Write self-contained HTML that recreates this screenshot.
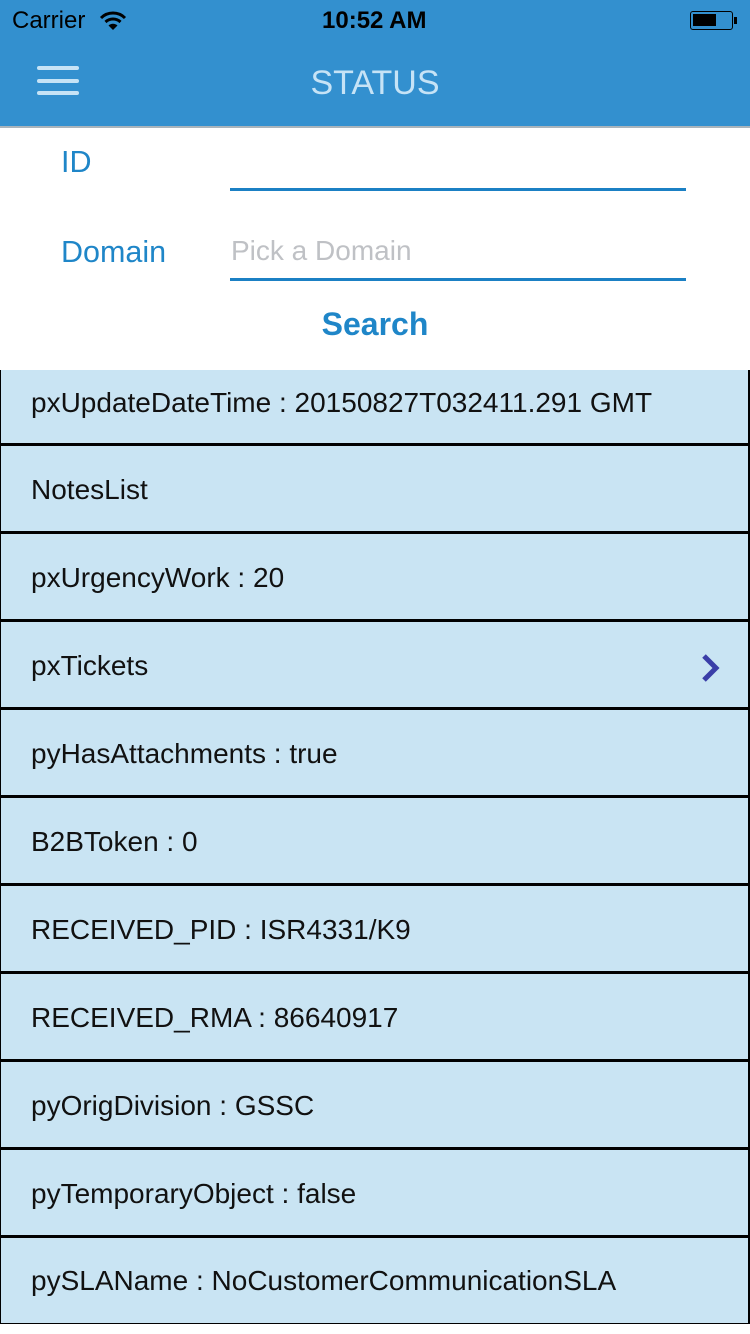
<!DOCTYPE html>
<html><head><meta charset="utf-8"><style>
*{margin:0;padding:0;box-sizing:border-box}
body{width:750px;height:1334px;background:#fff;position:relative;overflow:hidden;font-family:"Liberation Sans",sans-serif}
.hdr{position:absolute;left:0;top:0;width:750px;height:128px;background:#3390cf;border-bottom:2px solid #a9b4bc}
.t{position:absolute;font-size:24px;color:#000;top:7px}
.lbl{position:absolute;left:61px;color:#1f86c8;font-size:30.5px}
.ul{position:absolute;left:230px;width:456px;height:3px;background:#1b80c4}
.row{position:absolute;left:0;width:750px;background:#c9e4f3;border-left:1px solid #000;border-right:2px solid #000;font-size:28px;color:#111;padding-left:30px}
</style></head><body>
<div class="hdr">
<div class="t" style="left:12px">Carrier</div>
<svg style="position:absolute;left:99px;top:11px" width="28" height="20" viewBox="0 0 28 20"><path d="M2 7 A17 17 0 0 1 26 7" stroke="#000" stroke-width="3" fill="none"/><path d="M6.5 11 A11 11 0 0 1 21.5 11" stroke="#000" stroke-width="3" fill="none"/><path d="M14 19 L9.5 14.5 A6.5 6.5 0 0 1 18.5 14.5 Z" fill="#000"/></svg>
<div class="t" style="left:322px;font-weight:bold">10:52 AM</div>
<div style="position:absolute;left:690px;top:11px;width:43px;height:19px;border:1.5px solid #000;border-radius:3px"><div style="position:absolute;left:2px;top:2px;width:23px;height:12px;background:#000"></div></div>
<div style="position:absolute;left:734px;top:17px;width:3px;height:7px;background:#000"></div>
<div style="position:absolute;left:37px;top:66px;width:42px;height:4px;background:#c6e3f6;border-radius:2px"></div>
<div style="position:absolute;left:37px;top:79px;width:42px;height:4px;background:#c6e3f6;border-radius:2px"></div>
<div style="position:absolute;left:37px;top:91px;width:42px;height:4px;background:#c6e3f6;border-radius:2px"></div>
<div style="position:absolute;left:0;width:750px;text-align:center;top:64px;font-size:34px;color:#c6e3f6">STATUS</div>
</div>
<div class="lbl" style="top:145px">ID</div>
<div class="ul" style="top:188px"></div>
<div class="lbl" style="top:235px">Domain</div>
<div style="position:absolute;left:231px;top:235px;font-size:28px;color:#bfc1c5">Pick a Domain</div>
<div class="ul" style="top:278px"></div>
<div style="position:absolute;left:0;width:750px;text-align:center;top:306px;font-size:32px;font-weight:bold;color:#1f86c8">Search</div>

<div class="row" style="top:370px;height:73px;line-height:66px">pxUpdateDateTime : 20150827T032411.291 GMT</div>
<div class="row" style="top:443px;height:88px;border-top:3px solid #000;line-height:88px">NotesList</div>
<div class="row" style="top:531px;height:88px;border-top:3px solid #000;line-height:88px">pxUrgencyWork : 20</div>
<div class="row" style="top:619px;height:88px;border-top:3px solid #000;line-height:88px">pxTickets
<svg style="position:absolute;left:699px;top:31px" width="22" height="30" viewBox="0 0 22 30"><path d="M4 3 L16 15 L4 27" stroke="#3a3ea8" stroke-width="5" fill="none"/></svg></div>
<div class="row" style="top:707px;height:88px;border-top:3px solid #000;line-height:88px">pyHasAttachments : true</div>
<div class="row" style="top:795px;height:88px;border-top:3px solid #000;line-height:88px">B2BToken : 0</div>
<div class="row" style="top:883px;height:88px;border-top:3px solid #000;line-height:88px">RECEIVED_PID : ISR4331/K9</div>
<div class="row" style="top:971px;height:88px;border-top:3px solid #000;line-height:88px">RECEIVED_RMA : 86640917</div>
<div class="row" style="top:1059px;height:88px;border-top:3px solid #000;line-height:88px">pyOrigDivision : GSSC</div>
<div class="row" style="top:1147px;height:88px;border-top:3px solid #000;line-height:88px">pyTemporaryObject : false</div>
<div class="row" style="top:1235px;height:89px;border-top:3px solid #000;border-bottom:1px solid #000;line-height:86px">pySLAName : NoCustomerCommunicationSLA</div>
</body></html>
